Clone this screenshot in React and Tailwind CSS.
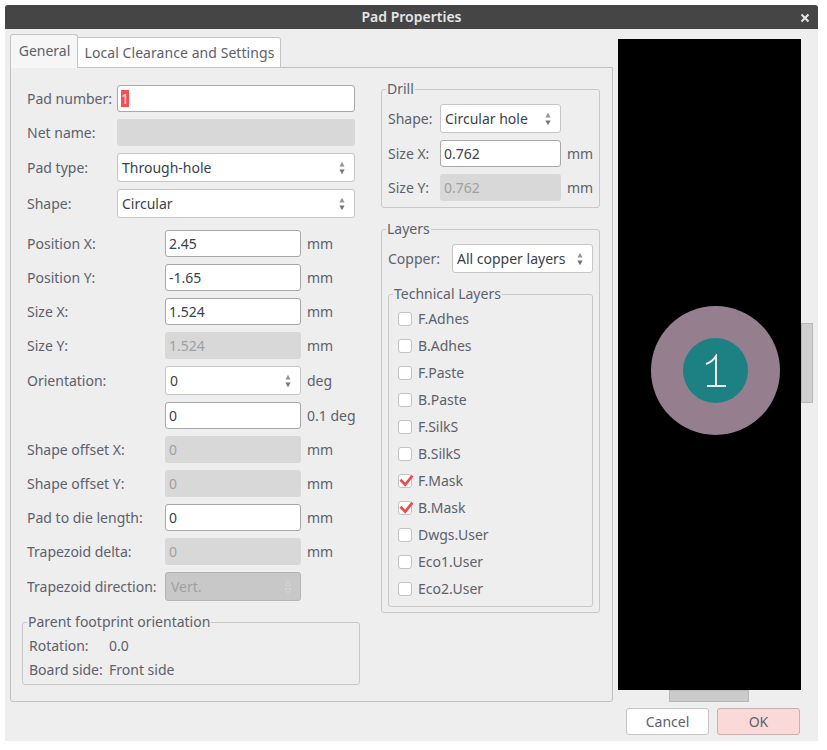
import React from 'react';

const font = { fontFamily: '"Noto Sans", sans-serif' };

const Arrows = ({ faded }) => (
  <svg width="6" height="14" viewBox="0 0 6 14" className="shrink-0">
    <path d="M3 0.8 L5.6 5.5 L0.4 5.5 Z" fill={faded ? '#c4c4c4' : '#92959b'} stroke={faded ? '#dedede' : 'none'} strokeWidth="0.7" />
    <path d="M3 13.2 L5.6 8.5 L0.4 8.5 Z" fill={faded ? '#c4c4c4' : '#72757b'} stroke={faded ? '#dedede' : 'none'} strokeWidth="0.7" />
  </svg>
);

const Input = ({ value, w, selected }) => (
  <div className={`${w} h-[27px] shrink-0 flex items-center pl-[3px] bg-white border border-[#a9a9a9] rounded-[3px] text-[#3a3f4a]`}>
    {selected ? <span className="w-[8px] h-[17px] flex items-center justify-center bg-[#f55050] text-[#f3e6e6]">{value}</span> : value}
  </div>
);

const Disabled = ({ value, w }) => (
  <div className={`${w} h-[27px] shrink-0 flex items-center pl-[4px] bg-[#d8d8d8] rounded-[3px] text-[#a0a0a0]`}>
    {value}
  </div>
);

const Select = ({ value, w }) => (
  <div className={`${w} h-[29px] shrink-0 flex items-center justify-between pl-[4px] pr-[9px] bg-white border border-[#c6c6c6] rounded-[3px] text-[#3a3f4a]`}>
    <span>{value}</span>
    <Arrows />
  </div>
);

const Row = ({ label, mt, children, unit }) => (
  <div className={`flex items-center ${mt}`}>
    <div className="w-[154px] shrink-0 pl-[16px] text-[#5c616c] whitespace-nowrap">{label}</div>
    {children}
    {unit && <div className="ml-[6px] text-[#5c616c] whitespace-nowrap">{unit}</div>}
  </div>
);

const TopRow = ({ label, mt, children }) => (
  <div className={`flex items-center ${mt}`}>
    <div className="w-[106px] shrink-0 pl-[16px] text-[#5c616c] whitespace-nowrap">{label}</div>
    {children}
  </div>
);

const Group = ({ legend, className, children }) => (
  <div className={`relative border border-[#c8c8c8] rounded-[3px] ${className}`}>
    <div className="absolute left-[4px] top-[-11px] px-px bg-[#eeeeee] text-[#5c616c] leading-[20px] whitespace-nowrap">{legend}</div>
    {children}
  </div>
);

const layers = [
  ['F.Adhes', false],
  ['B.Adhes', false],
  ['F.Paste', false],
  ['B.Paste', false],
  ['F.SilkS', false],
  ['B.SilkS', false],
  ['F.Mask', true],
  ['B.Mask', true],
  ['Dwgs.User', false],
  ['Eco1.User', false],
  ['Eco2.User', false],
];

const Check = ({ label, checked }) => (
  <div className="flex items-center h-[27px]">
    <div className="relative w-[14px] h-[14px] bg-white border border-[#c2c2c2] rounded-[3px] shrink-0">
      {checked && (
        <svg width="16" height="14" viewBox="0 0 16 14" className="absolute left-0 top-0">
          <path d="M1.4 4.7 L6.2 9.6 L13.4 0.7" fill="none" stroke="#f04a4a" strokeWidth="2.7" />
        </svg>
      )}
    </div>
    <span className="ml-[6px] text-[#5c616c]">{label}</span>
  </div>
);

export default function App() {
  return (
    <div className="w-[827px] h-[750px] bg-white pt-[5px] pl-[5px] text-[14px] leading-[20px]" style={font}>
      <div className="w-[813px] h-[736px] bg-[#eeeeee] flex flex-col">
        {/* title bar */}
        <div className="relative h-[24px] shrink-0 bg-[#454545] rounded-t-[3px] flex items-center justify-center text-[#e6e6e6] font-semibold text-[14px]">
          Pad Properties
          <svg width="10" height="10" viewBox="0 0 10 10" className="absolute right-[8px] top-[8px]">
            <path d="M1.5 1.5 L8.5 8.5 M8.5 1.5 L1.5 8.5" stroke="#e6e6e6" strokeWidth="2" />
          </svg>
        </div>

        <div className="flex pl-[5px] pt-[5px]">
          {/* notebook */}
          <div className="w-[603px] shrink-0">
            <div className="flex items-end h-[34px] relative z-10">
              <div className="w-[68px] h-[34px] pl-px pb-[2px] bg-[#f6f6f6] border border-[#c4c4c4] border-b-0 rounded-t-[3px] flex items-center justify-center text-[#5c616c]">General</div>
              <div className="w-[203px] h-[31px] pl-px bg-white border border-l-0 border-[#c4c4c4] rounded-tr-[3px] flex items-center justify-center text-[#5c616c] tracking-[0.06px] whitespace-nowrap">Local Clearance and Settings</div>
            </div>
            <div className="h-[635px] -mt-px border border-[#c0c0c0] rounded-b-[3px] flex">
              {/* left column */}
              <div className="w-[370px] shrink-0 pt-[17px]">
                <TopRow label="Pad number:"><Input value="1" w="w-[238px]" selected /></TopRow>
                <TopRow label="Net name:" mt="mt-[7px]"><Disabled w="w-[238px]" /></TopRow>
                <TopRow label="Pad type:" mt="mt-[7px]"><Select value="Through-hole" w="w-[238px]" /></TopRow>
                <TopRow label="Shape:" mt="mt-[7px]"><Select value="Circular" w="w-[238px]" /></TopRow>
                <Row label="Position X:" mt="mt-[12px]" unit="mm"><Input value="2.45" w="w-[136px]" /></Row>
                <Row label="Position Y:" mt="mt-[7px]" unit="mm"><Input value="-1.65" w="w-[136px]" /></Row>
                <Row label="Size X:" mt="mt-[7px]" unit="mm"><Input value="1.524" w="w-[136px]" /></Row>
                <Row label="Size Y:" mt="mt-[7px]" unit="mm"><Disabled value="1.524" w="w-[136px]" /></Row>
                <Row label="Orientation:" mt="mt-[7px]" unit="deg"><Select value="0" w="w-[136px]" /></Row>
                <Row mt="mt-[7px]" unit="0.1 deg"><Input value="0" w="w-[136px]" /></Row>
                <Row label="Shape offset X:" mt="mt-[7px]" unit="mm"><Disabled value="0" w="w-[136px]" /></Row>
                <Row label="Shape offset Y:" mt="mt-[7px]" unit="mm"><Disabled value="0" w="w-[136px]" /></Row>
                <Row label="Pad to die length:" mt="mt-[7px]" unit="mm"><Input value="0" w="w-[136px]" /></Row>
                <Row label="Trapezoid delta:" mt="mt-[7px]" unit="mm"><Disabled value="0" w="w-[136px]" /></Row>
                <Row label="Trapezoid direction:" mt="mt-[7px]">
                  <div className="w-[136px] h-[29px] flex items-center justify-between pl-[5px] pr-[9px] bg-[#c8c8c8] border border-[#b4b4b4] rounded-[3px] text-[#a0a0a0]">
                    <span>Vert.</span>
                    <Arrows faded />
                  </div>
                </Row>
                <Group legend="Parent footprint orientation" className="ml-[11px] mt-[21px] w-[338px] h-[63px] pt-[11px] pl-[6px] text-[#5c616c]">
                  <div className="flex h-[24px] items-center"><span className="w-[80px]">Rotation:</span><span>0.0</span></div>
                  <div className="flex h-[24px] items-center"><span className="w-[80px]">Board side:</span><span>Front side</span></div>
                </Group>
              </div>

              {/* right column */}
              <div className="pt-[21px]">
                <Group legend="Drill" className="w-[219px] h-[119px] pt-[14px] pl-[6px]">
                  <div className="flex items-center"><span className="w-[52px] text-[#5c616c]">Shape:</span><Select value="Circular hole" w="w-[121px]" /></div>
                  <div className="flex items-center mt-[7px]"><span className="w-[52px] text-[#5c616c]">Size X:</span><Input value="0.762" w="w-[121px]" /><span className="ml-[6px] text-[#5c616c]">mm</span></div>
                  <div className="flex items-center mt-[7px]"><span className="w-[52px] text-[#5c616c]">Size Y:</span><Disabled value="0.762" w="w-[121px]" /><span className="ml-[6px] text-[#5c616c]">mm</span></div>
                </Group>
                <Group legend="Layers" className="w-[219px] h-[384px] mt-[21px] pt-[14px] pl-[6px]">
                  <div className="flex items-center"><span className="w-[64px] text-[#5c616c]">Copper:</span><Select value="All copper layers" w="w-[141px]" /></div>
                  <Group legend="Technical Layers" className="w-[205px] h-[313px] mt-[21px] pt-[10px] pl-[9px]">
                    {layers.map(([name, on]) => <Check key={name} label={name} checked={on} />)}
                  </Group>
                </Group>
              </div>
            </div>
          </div>

          {/* preview */}
          <div className="ml-[5px] pt-[5px]">
            <div className="flex">
              <div className="w-[183px] h-[651px] bg-black flex items-center justify-center">
                <div className="w-[129px] h-[129px] rounded-full bg-[#957f8f] flex items-center justify-center ml-[12px] mt-[12px]">
                  <div className="w-[65px] h-[65px] rounded-full bg-[#1d8082] flex items-center justify-center">
                    <svg width="22" height="34" viewBox="0 0 22 34">
                      <path d="M1 10 C4 9 8 7 11 2 L11 32 M2 32 L21 32" fill="none" stroke="#e9e9e9" strokeWidth="2" />
                    </svg>
                  </div>
                </div>
              </div>
              <div className="w-[12px] pt-[284px]">
                <div className="h-[80px] bg-[#cfcfcf] border border-[#b8b8b8]" />
              </div>
            </div>
            <div className="h-[12px] pl-[51px]">
              <div className="w-[80px] h-[12px] bg-[#cbcbcb] border border-[#b8b8b8]" />
            </div>
          </div>
        </div>

        {/* dialog buttons */}
        <div className="flex justify-end gap-[8px] pr-[18px] mt-[6px]">
          <div className="w-[83px] h-[27px] bg-white border border-[#c6c6c6] rounded-[3px] flex items-center justify-center text-[#5c616c]">Cancel</div>
          <div className="w-[83px] h-[27px] bg-[#fcd9d9] border border-[#c6b0b0] rounded-[3px] flex items-center justify-center text-[#5c616c]">OK</div>
        </div>
      </div>
    </div>
  );
}
